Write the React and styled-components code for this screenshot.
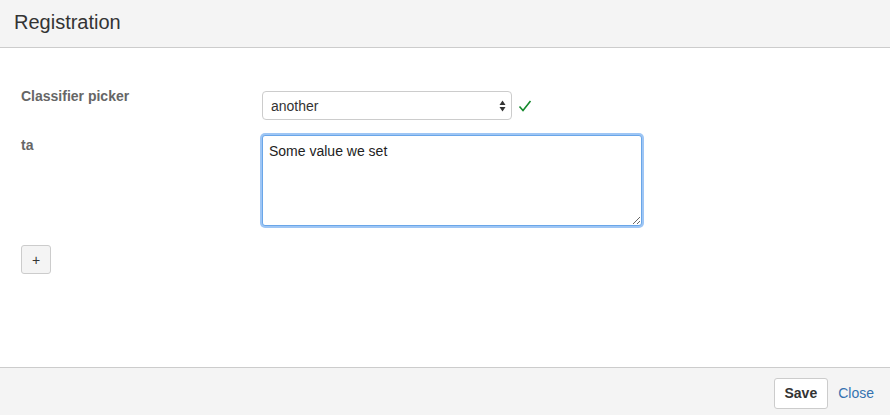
import { useEffect, useRef } from "react";
import styled, { createGlobalStyle } from "styled-components";

const GlobalStyle = createGlobalStyle`
  html, body {
    margin: 0;
    padding: 0;
    height: 100%;
    background: #fff;
    font-family: "Liberation Sans", Arial, sans-serif;
    color: #333;
  }
  #root {
    height: 100%;
  }
`;

const Dialog = styled.div`
  display: flex;
  flex-direction: column;
  height: 100vh;
`;

const Header = styled.header`
  height: 48px;
  flex: 0 0 auto;
  box-sizing: border-box;
  background: #f4f4f4;
  border-bottom: 1px solid #ccc;
  display: flex;
  align-items: center;
  padding: 0 14px 2px;
`;

const Title = styled.h2`
  margin: 0;
  font-size: 20px;
  font-weight: 400;
  color: #333;
`;

const Content = styled.div`
  flex: 1;
  padding: 40px 21px 0;
`;

const Form = styled.div`
  display: grid;
  grid-template-columns: 241px auto;
  row-gap: 15px;
  align-items: start;
`;

const Label = styled.label`
  font-size: 14px;
  font-weight: 700;
  line-height: 16px;
  color: #666;
  margin-top: ${(p) => p.$offset || 0}px;
`;

const Field = styled.div`
  display: flex;
  align-items: center;
  gap: 6px;
  margin-top: ${(p) => p.$offset || 0}px;
`;

const SelectWrap = styled.div`
  position: relative;
  width: 250px;
`;

const Select = styled.select`
  appearance: none;
  width: 100%;
  height: 29px;
  box-sizing: border-box;
  border: 1px solid #ccc;
  border-radius: 4px;
  background: #fff;
  padding: 0 24px 0 8px;
  font-family: inherit;
  font-size: 14px;
  color: #333;
  outline: none;
`;

const Arrows = styled.svg`
  position: absolute;
  right: 6px;
  top: 50%;
  transform: translateY(-50%);
  pointer-events: none;
`;

const TextArea = styled.textarea`
  width: 380px;
  height: 91px;
  box-sizing: border-box;
  border: 1px solid #6aa6e8;
  border-radius: 3px;
  box-shadow: 0 0 0 2px #9ec6f5;
  padding: 7px 6px;
  font-family: inherit;
  font-size: 14px;
  color: #222;
  outline: none;
  caret-color: #000;
`;

const AddButton = styled.button`
  margin-top: 19px;
  width: 30px;
  height: 29px;
  border: 1px solid #ccc;
  border-radius: 3px;
  background: #f4f4f4;
  font-family: inherit;
  font-size: 14px;
  color: #333;
  padding: 0;
  display: flex;
  align-items: center;
  justify-content: center;
`;

const Footer = styled.footer`
  height: 48px;
  flex: 0 0 auto;
  box-sizing: border-box;
  background: #f4f4f4;
  border-top: 1px solid #ccc;
  display: flex;
  align-items: center;
  justify-content: flex-end;
  gap: 10px;
  padding: 0 16px 0 0;
`;

const SaveButton = styled.button`
  height: 31px;
  padding: 0 10px;
  border: 1px solid #ccc;
  border-radius: 3px;
  background: #fff;
  font-family: inherit;
  font-size: 14px;
  font-weight: 700;
  color: #333;
  margin-top: 3px;
`;

const CloseLink = styled.a`
  font-size: 14px;
  color: #3572b0;
  text-decoration: none;
  margin-top: 3px;
`;

const App = () => {
  const ref = useRef(null);
  useEffect(() => {
    const el = ref.current;
    if (el) {
      el.focus();
      el.setSelectionRange(el.value.length, el.value.length);
    }
  }, []);

  return (
    <Dialog>
      <GlobalStyle />
      <Header>
        <Title>Registration</Title>
      </Header>
      <Content>
        <Form>
          <Label>Classifier picker</Label>
          <Field $offset={3}>
            <SelectWrap>
              <Select defaultValue="another">
                <option value="one">one</option>
                <option value="another">another</option>
              </Select>
              <Arrows width="7" height="12" viewBox="0 0 7 12">
                <path d="M3.5 0.5 L6.5 5 L0.5 5 Z" fill="#333" />
                <path d="M3.5 11.5 L6.5 7 L0.5 7 Z" fill="#333" />
              </Arrows>
            </SelectWrap>
            <svg width="14" height="14" viewBox="0 0 14 14">
              <polyline
                points="1.5,7.5 5,11.5 12.5,2"
                fill="none"
                stroke="#14892c"
                strokeWidth="1.6"
              />
            </svg>
          </Field>
          <Label $offset={2}>ta</Label>
          <Field>
            <TextArea ref={ref} defaultValue="Some value we set" />
          </Field>
        </Form>
        <AddButton>+</AddButton>
      </Content>
      <Footer>
        <SaveButton>Save</SaveButton>
        <CloseLink href="#">Close</CloseLink>
      </Footer>
    </Dialog>
  );
};

export default App;
